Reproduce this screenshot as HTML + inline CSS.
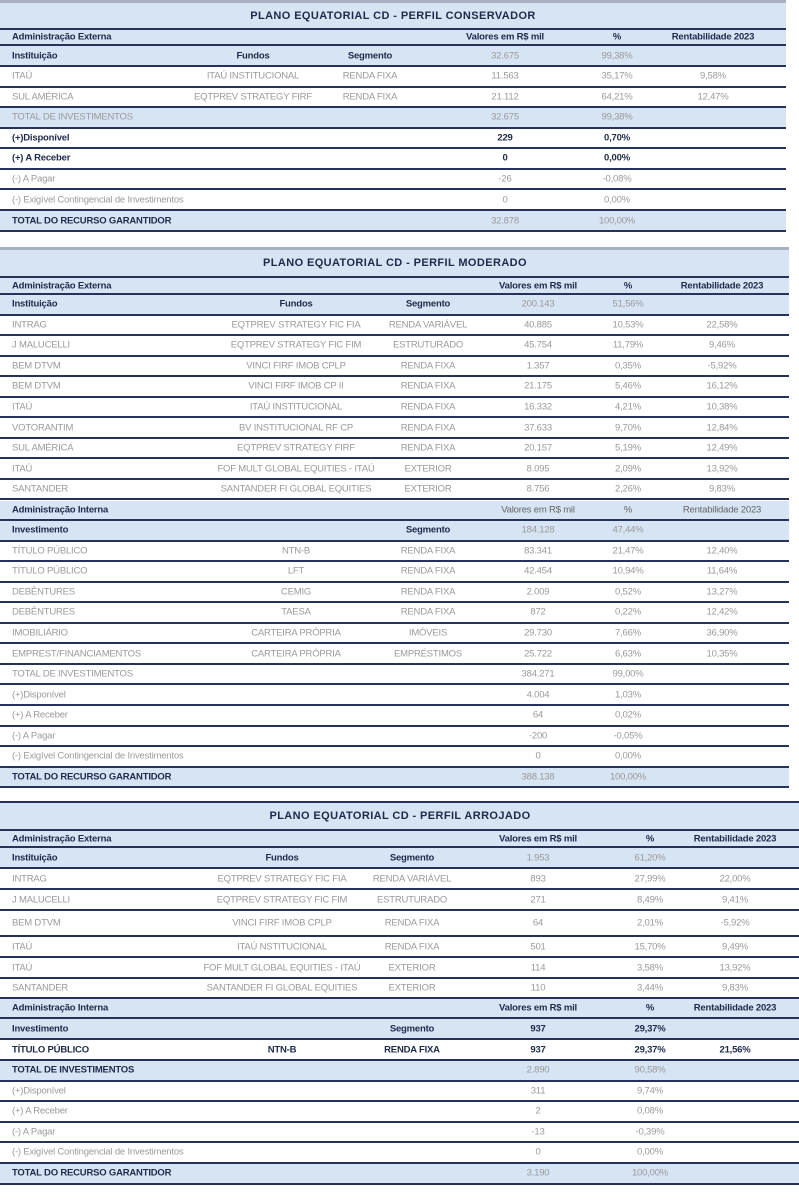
<!DOCTYPE html>
<html><head><meta charset="utf-8"><style>
*{margin:0;padding:0;box-sizing:border-box}
body{width:799px;height:1204px;background:#fff;position:relative;font-family:"Liberation Sans",sans-serif;font-size:9.5px;color:#9a9a9a;overflow:hidden;letter-spacing:-0.2px}
.r{position:absolute;left:0;border-bottom:2px solid #26325a}
.b{background:#d6e4f4}
.r span{position:absolute;top:50%;transform:translate(-50%,-50%);white-space:nowrap}
.r span.l{left:12px;transform:translateY(-50%)}
.k{font-weight:bold;color:#1d2a4a}
.n{color:#666}
.tt{font-weight:bold;color:#1d2a4a;font-size:11px;letter-spacing:0.4px}
.top{position:absolute;left:0;height:3px;background:#a7b1c2}
.T1 .r{width:786px}.T2 .r{width:789px}.T3 .r{width:799px}
.T1 .f{left:253px}.T1 .s{left:370px}.T1 .v{left:505px}.T1 .p{left:617px}.T1 .x{left:713px}
.T2 .f{left:296px}.T2 .s{left:428px}.T2 .v{left:538px}.T2 .p{left:628px}.T2 .x{left:722px}
.T3 .f{left:282px}.T3 .s{left:412px}.T3 .v{left:538px}.T3 .p{left:650px}.T3 .x{left:735px}
.T1 .c{left:393px}.T2 .c{left:395px}.T3 .c{left:400px}
</style></head><body>
<div class="T1">
<div class="top" style="top:0;width:786px"></div>
<div class="r b" style="top:3px;height:27px"><span class="c tt">PLANO EQUATORIAL CD - PERFIL CONSERVADOR</span></div>
<div class="r b" style="top:30px;height:16px"><span class="l k">Administração Externa</span><span class="v k">Valores em R$ mil</span><span class="p k">%</span><span class="x k">Rentabilidade 2023</span></div>
<div class="r b" style="top:46px;height:21px"><span class="l k">Instituição</span><span class="f k">Fundos</span><span class="s k">Segmento</span><span class="v">32.675</span><span class="p">99,38%</span></div>
<div class="r" style="top:67px;height:20.5px"><span class="l">ITAÚ</span><span class="f">ITAÚ INSTITUCIONAL</span><span class="s">RENDA FIXA</span><span class="v">11.563</span><span class="p">35,17%</span><span class="x">9,58%</span></div>
<div class="r" style="top:87.5px;height:20.5px"><span class="l">SUL AMÉRICA</span><span class="f">EQTPREV STRATEGY FIRF</span><span class="s">RENDA FIXA</span><span class="v">21.112</span><span class="p">64,21%</span><span class="x">12,47%</span></div>
<div class="r b" style="top:108px;height:20.5px"><span class="l">TOTAL DE INVESTIMENTOS</span><span class="v">32.675</span><span class="p">99,38%</span></div>
<div class="r" style="top:128.5px;height:20.5px"><span class="l k">(+)Disponível</span><span class="v k">229</span><span class="p k">0,70%</span></div>
<div class="r" style="top:149px;height:20.5px"><span class="l k">(+) A Receber</span><span class="v k">0</span><span class="p k">0,00%</span></div>
<div class="r" style="top:169.5px;height:20.5px"><span class="l">(-) A Pagar</span><span class="v">-26</span><span class="p">-0,08%</span></div>
<div class="r" style="top:190px;height:21px"><span class="l">(-) Exigível Contingencial de Investimentos</span><span class="v">0</span><span class="p">0,00%</span></div>
<div class="r b" style="top:211px;height:21px"><span class="l k">TOTAL DO RECURSO GARANTIDOR</span><span class="v">32.878</span><span class="p">100,00%</span></div>
</div>

<div class="T2">
<div class="top" style="top:247px;width:789px"></div>
<div class="r b" style="top:250px;height:28px"><span class="c tt">PLANO EQUATORIAL CD - PERFIL MODERADO</span></div>
<div class="r b" style="top:278px;height:17px"><span class="l k">Administração Externa</span><span class="v k">Valores em R$ mil</span><span class="p k">%</span><span class="x k">Rentabilidade 2023</span></div>
<div class="r b" style="top:295px;height:20.54px"><span class="l k">Instituição</span><span class="f k">Fundos</span><span class="s k">Segmento</span><span class="v">200.143</span><span class="p">51,56%</span></div>
<div class="r" style="top:315.5px;height:20.54px"><span class="l">INTRAG</span><span class="f">EQTPREV STRATEGY FIC FIA</span><span class="s">RENDA VARIÁVEL</span><span class="v">40.885</span><span class="p">10,53%</span><span class="x">22,58%</span></div>
<div class="r" style="top:336.1px;height:20.54px"><span class="l">J MALUCELLI</span><span class="f">EQTPREV STRATEGY FIC FIM</span><span class="s">ESTRUTURADO</span><span class="v">45.754</span><span class="p">11,79%</span><span class="x">9,46%</span></div>
<div class="r" style="top:356.6px;height:20.54px"><span class="l">BEM DTVM</span><span class="f">VINCI FIRF IMOB CPLP</span><span class="s">RENDA FIXA</span><span class="v">1.357</span><span class="p">0,35%</span><span class="x">-5,92%</span></div>
<div class="r" style="top:377.2px;height:20.54px"><span class="l">BEM DTVM</span><span class="f">VINCI FIRF IMOB CP II</span><span class="s">RENDA FIXA</span><span class="v">21.175</span><span class="p">5,46%</span><span class="x">16,12%</span></div>
<div class="r" style="top:397.7px;height:20.54px"><span class="l">ITAÚ</span><span class="f">ITAÚ INSTITUCIONAL</span><span class="s">RENDA FIXA</span><span class="v">16.332</span><span class="p">4,21%</span><span class="x">10,38%</span></div>
<div class="r" style="top:418.3px;height:20.54px"><span class="l">VOTORANTIM</span><span class="f">BV INSTITUCIONAL RF CP</span><span class="s">RENDA FIXA</span><span class="v">37.633</span><span class="p">9,70%</span><span class="x">12,84%</span></div>
<div class="r" style="top:438.8px;height:20.54px"><span class="l">SUL AMÉRICA</span><span class="f">EQTPREV STRATEGY FIRF</span><span class="s">RENDA FIXA</span><span class="v">20.157</span><span class="p">5,19%</span><span class="x">12,49%</span></div>
<div class="r" style="top:459.4px;height:20.54px"><span class="l">ITAÚ</span><span class="f">FOF MULT GLOBAL EQUITIES - ITAÚ</span><span class="s">EXTERIOR</span><span class="v">8.095</span><span class="p">2,09%</span><span class="x">13,92%</span></div>
<div class="r" style="top:479.9px;height:20.54px"><span class="l">SANTANDER</span><span class="f">SANTANDER FI GLOBAL EQUITIES</span><span class="s">EXTERIOR</span><span class="v">8.756</span><span class="p">2,26%</span><span class="x">9,83%</span></div>
<div class="r b" style="top:500.5px;height:20.54px"><span class="l k">Administração Interna</span><span class="v n">Valores em R$ mil</span><span class="p n">%</span><span class="x n">Rentabilidade 2023</span></div>
<div class="r b" style="top:521px;height:20.54px"><span class="l k">Investimento</span><span class="s k">Segmento</span><span class="v">184.128</span><span class="p">47,44%</span></div>
<div class="r" style="top:541.6px;height:20.54px"><span class="l">TÍTULO PÚBLICO</span><span class="f">NTN-B</span><span class="s">RENDA FIXA</span><span class="v">83.341</span><span class="p">21,47%</span><span class="x">12,40%</span></div>
<div class="r" style="top:562.1px;height:20.54px"><span class="l">TÍTULO PÚBLICO</span><span class="f">LFT</span><span class="s">RENDA FIXA</span><span class="v">42.454</span><span class="p">10,94%</span><span class="x">11,64%</span></div>
<div class="r" style="top:582.7px;height:20.54px"><span class="l">DEBÊNTURES</span><span class="f">CEMIG</span><span class="s">RENDA FIXA</span><span class="v">2.009</span><span class="p">0,52%</span><span class="x">13,27%</span></div>
<div class="r" style="top:603.2px;height:20.54px"><span class="l">DEBÊNTURES</span><span class="f">TAESA</span><span class="s">RENDA FIXA</span><span class="v">872</span><span class="p">0,22%</span><span class="x">12,42%</span></div>
<div class="r" style="top:623.8px;height:20.54px"><span class="l">IMOBILIÁRIO</span><span class="f">CARTEIRA PRÓPRIA</span><span class="s">IMÓVEIS</span><span class="v">29.730</span><span class="p">7,66%</span><span class="x">36,90%</span></div>
<div class="r" style="top:644.3px;height:20.54px"><span class="l">EMPREST/FINANCIAMENTOS</span><span class="f">CARTEIRA PRÓPRIA</span><span class="s">EMPRÉSTIMOS</span><span class="v">25.722</span><span class="p">6,63%</span><span class="x">10,35%</span></div>
<div class="r" style="top:664.9px;height:20.54px"><span class="l">TOTAL DE INVESTIMENTOS</span><span class="v">384.271</span><span class="p">99,00%</span></div>
<div class="r" style="top:685.4px;height:20.54px"><span class="l">(+)Disponível</span><span class="v">4.004</span><span class="p">1,03%</span></div>
<div class="r" style="top:706px;height:20.54px"><span class="l">(+) A Receber</span><span class="v">64</span><span class="p">0,02%</span></div>
<div class="r" style="top:726.5px;height:20.54px"><span class="l">(-) A Pagar</span><span class="v">-200</span><span class="p">-0,05%</span></div>
<div class="r" style="top:747.1px;height:20.54px"><span class="l">(-) Exigível Contingencial de Investimentos</span><span class="v">0</span><span class="p">0,00%</span></div>
<div class="r b" style="top:767.6px;height:20.54px"><span class="l k">TOTAL DO RECURSO GARANTIDOR</span><span class="v">388.138</span><span class="p">100,00%</span></div>
</div>

<div class="T3">
<div class="top" style="top:801px;width:799px;background:#26325a;height:2px"></div>
<div class="r b" style="top:803px;height:28px"><span class="c tt">PLANO EQUATORIAL CD - PERFIL ARROJADO</span></div>
<div class="r b" style="top:831px;height:17px"><span class="l k">Administração Externa</span><span class="v k">Valores em R$ mil</span><span class="p k">%</span><span class="x k">Rentabilidade 2023</span></div>
<div class="r b" style="top:848px;height:21px"><span class="l k">Instituição</span><span class="f k">Fundos</span><span class="s k">Segmento</span><span class="v">1.953</span><span class="p">61,20%</span></div>
<div class="r" style="top:869px;height:21px"><span class="l">INTRAG</span><span class="f">EQTPREV STRATEGY FIC FIA</span><span class="s">RENDA VARIÁVEL</span><span class="v">893</span><span class="p">27,99%</span><span class="x">22,00%</span></div>
<div class="r" style="top:890px;height:21px"><span class="l">J MALUCELLI</span><span class="f">EQTPREV STRATEGY FIC FIM</span><span class="s">ESTRUTURADO</span><span class="v">271</span><span class="p">8,49%</span><span class="x">9,41%</span></div>
<div class="r" style="top:911px;height:26px"><span class="l">BEM DTVM</span><span class="f">VINCI FIRF IMOB CPLP</span><span class="s">RENDA FIXA</span><span class="v">64</span><span class="p">2,01%</span><span class="x">-5,92%</span></div>
<div class="r" style="top:937px;height:21px"><span class="l">ITAÚ</span><span class="f">ITAÚ NSTITUCIONAL</span><span class="s">RENDA FIXA</span><span class="v">501</span><span class="p">15,70%</span><span class="x">9,49%</span></div>
<div class="r" style="top:958px;height:21px"><span class="l">ITAÚ</span><span class="f">FOF MULT GLOBAL EQUITIES - ITAÚ</span><span class="s">EXTERIOR</span><span class="v">114</span><span class="p">3,58%</span><span class="x">13,92%</span></div>
<div class="r" style="top:979px;height:20px"><span class="l">SANTANDER</span><span class="f">SANTANDER FI GLOBAL EQUITIES</span><span class="s">EXTERIOR</span><span class="v">110</span><span class="p">3,44%</span><span class="x">9,83%</span></div>
<div class="r b" style="top:999px;height:20px"><span class="l k">Administração Interna</span><span class="v k">Valores em R$ mil</span><span class="p k">%</span><span class="x k">Rentabilidade 2023</span></div>
<div class="r b" style="top:1019px;height:21px"><span class="l k">Investimento</span><span class="s k">Segmento</span><span class="v k">937</span><span class="p k">29,37%</span></div>
<div class="r" style="top:1040px;height:21px"><span class="l k">TÍTULO PÚBLICO</span><span class="f k">NTN-B</span><span class="s k">RENDA FIXA</span><span class="v k">937</span><span class="p k">29,37%</span><span class="x k">21,56%</span></div>
<div class="r b" style="top:1061px;height:20.5px"><span class="l k">TOTAL DE INVESTIMENTOS</span><span class="v">2.890</span><span class="p">90,58%</span></div>
<div class="r" style="top:1081.5px;height:20.5px"><span class="l">(+)Disponível</span><span class="v">311</span><span class="p">9,74%</span></div>
<div class="r" style="top:1102px;height:20.5px"><span class="l">(+) A Receber</span><span class="v">2</span><span class="p">0,08%</span></div>
<div class="r" style="top:1122.5px;height:20.5px"><span class="l">(-) A Pagar</span><span class="v">-13</span><span class="p">-0,39%</span></div>
<div class="r" style="top:1143px;height:20.5px"><span class="l">(-) Exigível Contingencial de Investimentos</span><span class="v">0</span><span class="p">0,00%</span></div>
<div class="r b" style="top:1163.5px;height:21px"><span class="l k">TOTAL DO RECURSO GARANTIDOR</span><span class="v">3.190</span><span class="p">100,00%</span></div>
</div>
</body></html>
